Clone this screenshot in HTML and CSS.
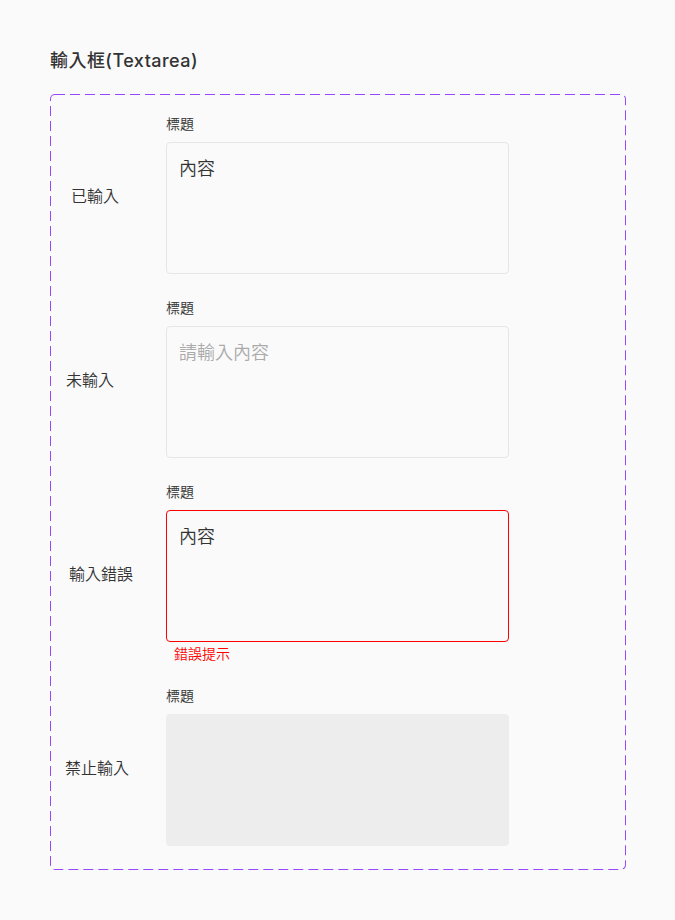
FILE: index.html
```html
<!DOCTYPE html>
<html lang="zh-Hant">
<head>
<meta charset="utf-8">
<title>輸入框(Textarea)</title>
<link rel="stylesheet" href="styles.css">
</head>
<body>
<main class="page">
  <h1 class="title">輸入框(Textarea)</h1>
  <section class="variants">
    <div class="row">
      <div class="state state-filled">已輸入</div>
      <div class="field">
        <label class="field-label">標題</label>
        <textarea class="textarea">內容</textarea>
      </div>
    </div>
    <div class="row">
      <div class="state state-empty">未輸入</div>
      <div class="field">
        <label class="field-label">標題</label>
        <textarea class="textarea" placeholder="請輸入內容"></textarea>
      </div>
    </div>
    <div class="row">
      <div class="state state-error">輸入錯誤</div>
      <div class="field">
        <label class="field-label">標題</label>
        <textarea class="textarea textarea-error">內容</textarea>
        <div class="error-text">錯誤提示</div>
      </div>
    </div>
    <div class="row">
      <div class="state state-disabled">禁止輸入</div>
      <div class="field">
        <label class="field-label">標題</label>
        <textarea class="textarea textarea-disabled" disabled></textarea>
      </div>
    </div>
  </section>
</main>
</body>
</html>
```
FILE: styles.css
```css
* { box-sizing: border-box; }

html, body {
  margin: 0;
  padding: 0;
  background: #fafafa;
}

body {
  font-family: Inter, "Noto Sans CJK TC", "Noto Sans", sans-serif;
  font-weight: 350;
  color: #333333;
}

.page {
  padding: 48px 0 0 50px;
}

.title {
  margin: 0 0 20px 0;
  font-size: 18px;
  line-height: 26px;
  font-weight: 500;
  letter-spacing: 0.45px;
  color: #333333;
}

.variants {
  width: 576px;
  padding: 20px 0 24px 0;
  display: flex;
  flex-direction: column;
  gap: 24px;
  border-radius: 5px;
  background-image: url("data:image/svg+xml,%3Csvg xmlns='http://www.w3.org/2000/svg' width='100%25' height='100%25'%3E%3Crect x='0' y='0' width='100%25' height='100%25' rx='5' ry='5' fill='none' stroke='%239747FF' stroke-width='2' stroke-dasharray='10 5'/%3E%3C/svg%3E");
}

.row {
  display: flex;
  align-items: center;
}

.state {
  width: 116px;
  font-size: 16px;
  line-height: 24px;
  padding-top: 3px;
  color: #333333;
}

.state-filled { padding-left: 21px; }
.state-empty { padding-left: 16px; }
.state-error { padding-left: 19px; }
.state-disabled { padding-left: 15px; }

.field {
  display: flex;
  flex-direction: column;
}

.field-label {
  font-size: 14px;
  line-height: 20px;
  margin-bottom: 8px;
  color: #333333;
}

.textarea {
  display: block;
  width: 343px;
  height: 132px;
  margin: 0;
  padding: 12px 12px;
  border: 1px solid #e6e6e6;
  border-radius: 4px;
  background: #fafafa;
  font-family: Inter, "Noto Sans CJK TC", "Noto Sans", sans-serif;
  font-weight: 350;
  font-size: 18px;
  line-height: 27px;
  color: #333333;
  resize: none;
  outline: none;
  overflow: hidden;
}

.textarea::placeholder {
  color: #aaaaaa;
  opacity: 1;
}

.textarea-error {
  border-color: #ff0000;
}

.textarea-disabled {
  background: #ededed;
  border-color: #ededed;
}

.error-text {
  margin-top: 4px;
  padding-left: 8px;
  font-size: 14px;
  line-height: 16px;
  color: #ff0000;
}
```
